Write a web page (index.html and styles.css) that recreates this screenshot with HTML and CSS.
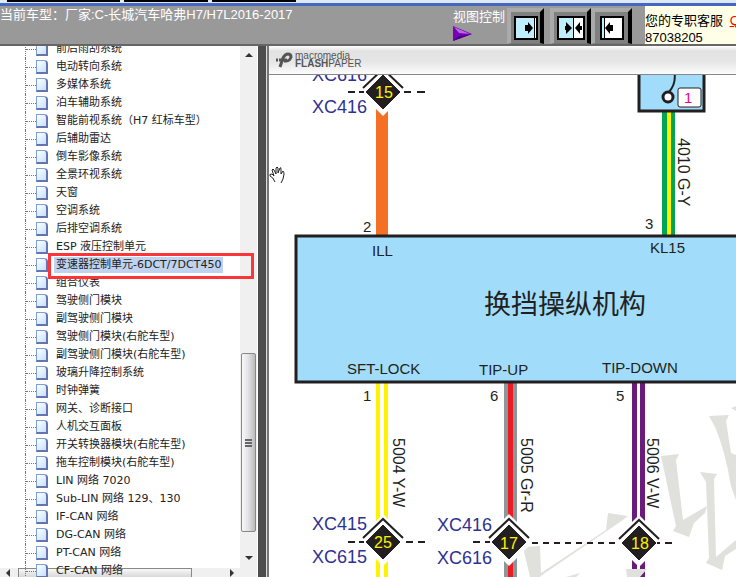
FILE: index.html
```html
<!DOCTYPE html>
<html lang="zh-CN">
<head>
<meta charset="utf-8">
<title>长城汽车哈弗H7/H7L2016-2017</title>
<link rel="stylesheet" href="styles.css">
</head>
<body>
<div class="tabs"><span></span><span></span><span></span></div>
<header class="header">
  <h1 class="title">当前车型：厂家:C-长城汽车哈弗H7/H7L2016-2017</h1>
  <div class="view-label">
    <span>视图控制</span>
    <svg width="19" height="16" viewBox="0 0 19 16"><path d="M0 0L19 8L0 15Z" fill="#7a00b8"/><path d="M1 1L17 8L6 7Z" fill="#b46be0"/><path d="M0 15L19 8L6 10Z" fill="#4b0082"/></svg>
  </div>
  <div class="view-buttons">
    <button class="view-button" aria-label="展开目录"><svg width="24" height="24" viewBox="0 0 24 24"><rect x="1" y="1" width="22" height="22" fill="#fff" stroke="#000" stroke-width="2"/><path d="M2 2H20V22H2Z" fill="#bfeeff"/><path d="M20.500 1V23" stroke="#000"/><path d="M11 9H14V6L19 12L14 18V15H11Z"/></svg></button>
    <button class="view-button" aria-label="平分视图"><svg width="28" height="24" viewBox="0 0 28 24"><rect x="1" y="1" width="26" height="22" fill="#fff" stroke="#000" stroke-width="2"/><path d="M2 2H16V22H2Z" fill="#bfeeff"/><path d="M16.500 1V23" stroke="#000"/><path d="M8 10H9V6L15 12L9 18V14H8Z"/><path d="M25 10H23V6L18 12L23 18V14H25Z"/></svg></button>
    <button class="view-button" aria-label="收起目录"><svg width="24" height="24" viewBox="0 0 24 24"><rect x="1" y="1" width="22" height="22" fill="#fff" stroke="#000" stroke-width="2"/><path d="M2 2H4V22H2Z" fill="#bfeeff"/><path d="M4.500 1V23" stroke="#000"/><path d="M13 9H10V6L5 12L10 18V15H13Z"/></svg></button>
  </div>
  <div class="contact">您的专职客服 <a href="#">QQ</a><br>87038205</div>
</header>
<main class="main">
  <nav class="tree-pane">
    <div class="tree-view">
      <ul class="tree" id="tree">
        <li><a href="#">前后雨刮系统</a></li>
        <li><a href="#">电动转向系统</a></li>
        <li><a href="#">多媒体系统</a></li>
        <li><a href="#">泊车辅助系统</a></li>
        <li><a href="#">智能前视系统（H7 红标车型）</a></li>
        <li><a href="#">后辅助雷达</a></li>
        <li><a href="#">倒车影像系统</a></li>
        <li><a href="#">全景环视系统</a></li>
        <li><a href="#">天窗</a></li>
        <li><a href="#">空调系统</a></li>
        <li><a href="#">后排空调系统</a></li>
        <li><a href="#">ESP 液压控制单元</a></li>
        <li class="selected"><a href="#">变速器控制单元-6DCT/7DCT450</a></li>
        <li><a href="#">组合仪表</a></li>
        <li><a href="#">驾驶侧门模块</a></li>
        <li><a href="#">副驾驶侧门模块</a></li>
        <li><a href="#">驾驶侧门模块(右舵车型)</a></li>
        <li><a href="#">副驾驶侧门模块(右舵车型)</a></li>
        <li><a href="#">玻璃升降控制系统</a></li>
        <li><a href="#">时钟弹簧</a></li>
        <li><a href="#">网关、诊断接口</a></li>
        <li><a href="#">人机交互面板</a></li>
        <li><a href="#">开关转换器模块(右舵车型)</a></li>
        <li><a href="#">拖车控制模块(右舵车型)</a></li>
        <li><a href="#">LIN 网络 7020</a></li>
        <li><a href="#">Sub-LIN 网络 129、130</a></li>
        <li><a href="#">IF-CAN 网络</a></li>
        <li><a href="#">DG-CAN 网络</a></li>
        <li><a href="#">PT-CAN 网络</a></li>
        <li><a href="#">CF-CAN 网络</a></li>
      </ul>
      <div class="hscroll"><i class="arrow left"></i><div class="hthumb"></div><i class="arrow right"></i></div>
    </div>
    <div class="vscroll"><i class="arrow up"></i><div class="vthumb"><i></i><i></i><i></i></div><i class="arrow down"></i></div>
  </nav>
  <div class="divider"></div>
  <section class="viewer">
    <div class="paper-bar">
      <svg width="17" height="16" viewBox="0 0 17 16" fill="none" stroke="#555"><path d="M4 15L7 6Q9 2 12 2Q15 2 15 5Q14 9 10 9H8" stroke-width="3"/><path d="M0 8H2M3 8H11" stroke-width="3"/></svg>
      <div class="brand"><span>macromedia</span><span class="brand-name"><b>FLASH</b>PAPER</span></div>
    </div>
    <svg class="diagram" viewBox="269 75 467 502" preserveAspectRatio="xMinYMin slice" role="img" aria-label="换挡操纵机构">
      <defs>
        <g id="node">
          <path d="M0 -28L26 -2L0 24L-26 -2Z" fill="#fff"/>
          <path d="M-20 -4L0 -23L20 -4" fill="none" stroke="#231f20" stroke-width="2"/>
          <path d="M0 -18L18 0L0 18L-18 0Z" fill="#231f20" stroke="#fff"/>
        </g>
      </defs>
      <g stroke="none">
        <path d="M376 105H388V236H376Z" fill="#f47024"/>
        <path d="M662 112H675V236H662Z" fill="#00a651"/><path d="M667 112H671V236H667Z" fill="#fff200"/>
        <path d="M376 383H380V577H376ZM384 383H388V577H384Z" fill="#fff200"/>
        <path d="M504 383H517V577H504Z" fill="#8c9799"/><path d="M508 383H513V577H508Z" fill="#ed1c24"/>
        <path d="M632 383H637V577H632ZM640 383H645V577H640Z" fill="#6b1b7b"/>
      </g>
      <g fill="#e0e0dd">
        <path d="M661 456L679 454L676 460L683 520L707 506L705 513L694 523L689 537L673 531L676 526Z"/>
        <path d="M700 472L717 474L714 479L716 557L736 540V549L725 556L722 570L706 563L709 558L706 482Z"/>
        <path d="M709 416L729 415L726 421L731 453L736 455V500L731 486Q725 450 715 427Z"/>
        <path d="M731 408L736 406V411Z"/>
        <path d="M608 513L628 516L620 522L542 575L540 577H530L523 547L540 546L541 573L606 530Z"/>
        <path d="M626 569H647L640 577H627ZM566 577L580 573L576 577Z"/>
      </g>
      <g fill="#a1ddfb" stroke="#231f20" stroke-width="3">
        <path d="M296 236H750V382H296Z"/>
        <path d="M639 70H704V111H639Z"/>
      </g>
      <path d="M674 70Q677 83 669 92" fill="none" stroke="#231f20" stroke-width="2"/>
      <circle cx="668" cy="97" r="5" fill="#fff" stroke="#231f20" stroke-width="3"/>
      <rect x="678" y="88" width="23" height="19" rx="2" fill="#fff" stroke="#231f20"/>
      <use href="#node" x="383" y="92"/><use href="#node" x="383" y="542"/><use href="#node" x="509" y="542"/><use href="#node" x="639" y="543"/>
      <g fill="none" stroke="#231f20" stroke-width="2">
        <path d="M348 92H355M359 92H364M404 92H411M417 92H425"/>
        <path d="M348 542H355M359 542H364M406 542H413M418 542H425"/>
        <path d="M473 542H480M485 542H490"/><path d="M532 543H618" stroke-dasharray="6 5"/><path d="M657 543H660M665 543H672"/>
      </g>
      <g class="number" text-anchor="middle"><text x="384" y="98">15</text><text x="383" y="548">25</text><text x="509" y="549">17</text><text x="640" y="549">18</text></g>
      <g class="connector"><text x="312" y="81">XC616</text><text x="312" y="113">XC416</text><text x="312" y="530">XC415</text><text x="312" y="563">XC615</text><text x="437" y="531">XC416</text><text x="437" y="564">XC616</text></g>
      <g class="pin">
        <text x="363" y="232">2</text><text x="645" y="229">3</text><text x="363" y="401">1</text><text x="490" y="401">6</text><text x="616" y="401">5</text>
        <text x="372" y="256">ILL</text><text x="650" y="253">KL15</text><text x="347" y="374">SFT-LOCK</text><text x="479" y="375">TIP-UP</text><text x="602" y="373">TIP-DOWN</text>
      </g>
      <text class="pin magenta" x="684" y="103">1</text>
      <text class="unit-name" x="484" y="314">换挡操纵机构</text>
      <g class="wire">
        <text transform="translate(678 138) rotate(90)">4010 G-Y</text>
        <text transform="translate(393 438) rotate(90)">5004 Y-W</text>
        <text transform="translate(521 438) rotate(90)">5005 Gr-R</text>
        <text transform="translate(647 438) rotate(90)">5006 V-W</text>
      </g>
      <path d="M275 182Q273 177 270 176Q269 174 272 174L274 176L272 170Q273 168 274 170L276 174V168Q277 166 278 168V173L280 168Q281 167 281 169V174L283 171Q284 172 284 174L283 179L281 183" fill="#fff" stroke="#222"/>
    </svg>
  </section>
</main>
</body>
</html>
```

FILE: styles.css
```css
*, *::before, *::after { box-sizing: border-box; }

body {
  margin: 0;
  height: 100vh;
  display: flex;
  flex-direction: column;
  overflow: hidden;
  background: #fff;
  font-family: "Liberation Sans", "Noto Sans CJK SC", sans-serif;
}

.tabs {
  display: flex;
  gap: 4px;
  height: 6px;
  padding-left: 7px;
  flex: none;
  background: #dfe8f5;
  border-bottom: 3px solid #4268c0;
}
.tabs span { width: 113px; height: 2px; background: #000; }
.tabs span:nth-child(n+2) { width: 84px; }

.header {
  display: flex;
  flex: none;
  height: 40px;
  background: #999;
  border-bottom: 2px solid #666;
  color: #fff;
  font-size: 13px;
}
.title {
  flex: 1;
  min-width: 0;
  margin: 0;
  font-size: 13px;
  font-weight: 400;
  line-height: 17px;
  white-space: nowrap;
}
.view-label { width: 55px; padding: 3px 0 0 1px; line-height: 16px; white-space: nowrap; }
.view-label svg { display: block; margin-top: 1px; }

.view-buttons { display: flex; padding-top: 2px; }
.view-button {
  display: flex;
  align-items: center;
  justify-content: center;
  width: 37px;
  height: 36px;
  padding: 0;
  background: #808080;
  border: 4px solid;
  border-color: #aaa #000 #777 #aaa;
  border-bottom-width: 1px;
}
.view-button:nth-child(2) { width: 41px; margin-left: 6px; }
.view-button:nth-child(3) { width: 41px; }

.contact {
  width: 91px;
  margin-left: 13px;
  padding-top: 6px;
  overflow: hidden;
  background: #ffffe8;
  color: #000;
  line-height: 17px;
  white-space: nowrap;
}
.contact a { margin-left: 3px; color: #f00; }

.main { display: flex; flex: 1; min-height: 0; }

.tree-pane { display: flex; width: 258px; flex: none; }
.tree-view { position: relative; flex: 1; min-width: 0; }
.tree {
  height: 100%;
  margin: 0;
  padding: 0 0 0 25px;
  overflow: hidden;
  list-style: none;
  font: 11px "DejaVu Sans", "Noto Sans CJK SC", sans-serif;
}
.tree li {
  display: flex;
  align-items: center;
  position: relative;
  z-index: 1;
  height: 18px;
  border-left: 1px dotted #777;
}
.tree li:first-child { margin-top: -6px; }
.tree li::before { content: ""; width: 10px; border-top: 1px dotted #777; }
.tree a {
  display: flex;
  align-items: center;
  line-height: 16px;
  color: #222;
  text-decoration: none;
  white-space: nowrap;
}
.tree a::before {
  content: "";
  width: 12px;
  height: 14px;
  margin-right: 8px;
  border: 1px solid #7ba0dc;
  border-right: 2px solid #6674ae;
  border-bottom: 2px solid #6674ae;
  border-top-right-radius: 4px;
  background: linear-gradient(135deg, #fff, #c4e0ff);
}
.selected a { background: linear-gradient(#c0d2ee, #c0d2ee) 18px 0 no-repeat; padding-right: 2px; }
.tree-view::after {
  content: "";
  position: absolute;
  z-index: 2;
  left: 48px;
  top: 207px;
  width: 206px;
  height: 26px;
  border: 3px solid #fc3636;
}

.vscroll {
  display: flex;
  flex-direction: column;
  align-items: center;
  width: 17px;
  margin-right: 1px;
  padding: 7px 1px 17px;
  background: #f0f0f0;
}
.arrow { border: 4px solid transparent; }
.up { border-top: 0; border-bottom-color: #333; }
.down { border-bottom: 0; border-top-color: #333; margin-top: 24px; }
.left { border-left: 0; border-right-color: #333; }
.right { border-right: 0; border-left-color: #333; }
.vthumb {
  display: flex;
  flex-direction: column;
  align-items: center;
  justify-content: center;
  gap: 1px;
  width: 15px;
  height: 179px;
  margin-top: auto;
  border: 1px solid #888;
  border-radius: 2px;
  background: linear-gradient(90deg, #f8f8f8, #e4e4e8 45%, #bbb);
}
.vthumb i { width: 7px; height: 2px; background: #666; }

.hscroll {
  position: absolute;
  left: 0;
  right: 0;
  bottom: 0;
  display: flex;
  align-items: center;
  height: 9px;
  padding: 0 6px;
  background: #f0f0f0;
}
.hthumb {
  width: 174px;
  height: 9px;
  margin: 0 auto 0 8px;
  border: 1px solid #888;
  border-bottom: 0;
  background: linear-gradient(#f8f8f8, #d8d8d8);
}

.divider { width: 9px; flex: none; background: #4d4d4d; border-right: 1px solid #ddd; }

.viewer {
  display: flex;
  flex-direction: column;
  flex: 1;
  min-width: 0;
  border-left: 2px solid #777;
}
.paper-bar {
  display: flex;
  align-items: center;
  gap: 2px;
  flex: none;
  height: 29px;
  padding-left: 7px;
  background: linear-gradient(#fff 0, #e2e2e2 5px, #e6e6e6 16px, #fcfcfc);
  border-bottom: 1px solid #888;
  color: #555;
}
.brand { display: flex; flex-direction: column; font-size: 10px; line-height: 8px; }
.brand-name { font-size: 10px; }
.diagram { flex: 1; min-height: 0; width: 100%; }

.connector { font-size: 18px; fill: #2e3192; }
.number { font-size: 16px; fill: #fff200; }
.pin { font-size: 15px; fill: #231f20; }
.magenta { fill: #ec008c; }
.wire { font-size: 16px; fill: #231f20; }
.unit-name { font-size: 27px; fill: #231f20; }
```
